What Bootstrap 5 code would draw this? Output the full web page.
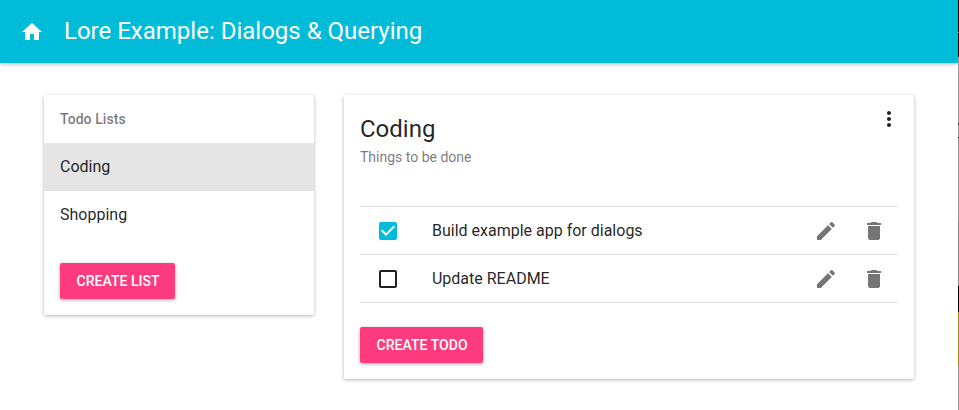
<!DOCTYPE html>
<html lang="en">
<head>
<meta charset="utf-8">
<meta name="viewport" content="width=device-width, initial-scale=1">
<title>Lore Example: Dialogs &amp; Querying</title>
<link href="https://cdn.jsdelivr.net/npm/bootstrap@5.3.0/dist/css/bootstrap.min.css" rel="stylesheet">
<style>
  body { font-family: Roboto, sans-serif; color: rgba(0,0,0,.87); background: #fff; height: 410px; overflow: hidden; }
  .page { min-width: 0; height: 410px; overflow: hidden; }
  .edge { width: 1px; height: 410px; background: linear-gradient(#000 0 32px, #999 32px 33px, #000 33px 57px, #999 57px 123px, #333 123px 125px, #999 125px 137px, #111 137px 138px, #999 138px 221px, #888 221px 286px, #000 286px 312px, #b08f00 312px 366px, #999 366px); }
  .appbar { height: 63px; padding: 0 20px; background: #00bcd9; box-shadow: 0 1px 5px rgba(0,0,0,.16), 0 1px 3px rgba(0,0,0,.16); }
  .appbar .navbar-brand { font-size: 24px; line-height: 36px; margin-left: 20px; padding: 0 0 2px; }
  .board { max-width: 900px; padding: 32px 15px 0; }
  .board > .row { --bs-gutter-x: 30px; }
  .paper { border: 0; border-radius: 2px; color: inherit; box-shadow: 0 1px 5px rgba(0,0,0,.14), 0 1px 3px rgba(0,0,0,.16); }
  .subheader { font-size: 14px; font-weight: 500; line-height: 48px; letter-spacing: .07px; color: rgba(0,0,0,.54); }
  .entry { height: 48px; line-height: 48px; padding: 0 16px; border: 0; color: rgba(0,0,0,.87); }
  .entry.chosen { background: #e5e5e5; }
  .raised { height: 36px; padding: 0 15.6px 0 16.6px; border: 0; border-radius: 2px; font-size: 14px; font-weight: 500; line-height: 37px; letter-spacing: .03px; background: #ff3b80; box-shadow: 0 1px 5px rgba(0,0,0,.16), 0 1px 3px rgba(0,0,0,.2); }
  .intro { height: 111px; }
  .heading { font-size: 24px; font-weight: 400; line-height: 36px; }
  .note { font-size: 14px; line-height: 20px; color: rgba(0,0,0,.54); }
  .more { margin: -4px -3px 0 0; }
  .todos { border-top: 1px solid #e0e0e0; margin: 0 16px; }
  .todo { height: 48px; border-bottom: 1px solid #e0e0e0; line-height: 47px; }
  .todo .tick { width: 72px; padding-left: 16px; }
  .todo .tools { gap: 24px; padding-right: 12px; color: #757575; }
  .ticked { color: #00bcd9; }
  svg { display: block; fill: currentColor; }
</style>
<script src="https://cdn.jsdelivr.net/npm/bootstrap@5.3.0/dist/js/bootstrap.bundle.min.js"></script>
</head>
<body>
<div class="d-flex">
  <div class="page flex-grow-1">
    <nav class="navbar appbar justify-content-start flex-nowrap text-white">
      <svg width="24" height="24" viewBox="0 0 24 24"><path d="M10 20v-6h4v6h5v-8h3L12 3 2 12h3v8z"/></svg>
      <span class="navbar-brand text-white">Lore Example: Dialogs &amp; Querying</span>
    </nav>
    <main class="container-fluid board">
      <div class="row align-items-start">
        <div class="col-4">
          <div class="card paper">
            <div class="subheader px-3">Todo Lists</div>
            <div class="list-group list-group-flush">
              <a class="list-group-item entry chosen">Coding</a>
              <a class="list-group-item entry">Shopping</a>
            </div>
            <div class="px-3 pb-3 pt-4"><button class="btn text-white raised">CREATE LIST</button></div>
          </div>
        </div>
        <div class="col-8">
          <div class="card paper">
            <div class="intro d-flex justify-content-between px-3 pt-3">
              <div>
                <h1 class="heading mb-0">Coding</h1>
                <div class="note">Things to be done</div>
              </div>
              <svg class="more" width="24" height="24" viewBox="0 0 24 24"><path d="M12 8c1.1 0 2-.9 2-2s-.9-2-2-2-2 .9-2 2 .9 2 2 2zm0 2c-1.1 0-2 .9-2 2s.9 2 2 2 2-.9 2-2-.9-2-2-2zm0 6c-1.1 0-2 .9-2 2s.9 2 2 2 2-.9 2-2-.9-2-2-2z"/></svg>
            </div>
            <div class="todos">
              <div class="todo d-flex align-items-center">
                <div class="tick ticked"><svg width="24" height="24" viewBox="0 0 24 24"><path d="M19 3H5c-1.11 0-2 .9-2 2v14c0 1.1.89 2 2 2h14c1.11 0 2-.9 2-2V5c0-1.1-.89-2-2-2zm-9 14l-5-5 1.41-1.41L10 14.17l7.59-7.59L19 8l-9 9z"/></svg></div>
                <div class="flex-grow-1">Build example app for dialogs</div>
                <div class="tools d-flex">
                  <svg width="24" height="24" viewBox="0 0 24 24"><path d="M3 17.25V21h3.75L17.81 9.94l-3.75-3.75L3 17.25zM20.71 7.04c.39-.39.39-1.02 0-1.41l-2.34-2.34c-.39-.39-1.02-.39-1.41 0l-1.83 1.83 3.75 3.75 1.83-1.83z"/></svg>
                  <svg width="24" height="24" viewBox="0 0 24 24"><path d="M6 19c0 1.1.9 2 2 2h8c1.1 0 2-.9 2-2V7H6v12zM19 4h-3.5l-1-1h-5l-1 1H5v2h14V4z"/></svg>
                </div>
              </div>
              <div class="todo d-flex align-items-center">
                <div class="tick"><svg width="24" height="24" viewBox="0 0 24 24"><path d="M19 5v14H5V5h14m0-2H5c-1.1 0-2 .9-2 2v14c0 1.1.9 2 2 2h14c1.1 0 2-.9 2-2V5c0-1.1-.9-2-2-2z"/></svg></div>
                <div class="flex-grow-1">Update README</div>
                <div class="tools d-flex">
                  <svg width="24" height="24" viewBox="0 0 24 24"><path d="M3 17.25V21h3.75L17.81 9.94l-3.75-3.75L3 17.25zM20.71 7.04c.39-.39.39-1.02 0-1.41l-2.34-2.34c-.39-.39-1.02-.39-1.41 0l-1.83 1.83 3.75 3.75 1.83-1.83z"/></svg>
                  <svg width="24" height="24" viewBox="0 0 24 24"><path d="M6 19c0 1.1.9 2 2 2h8c1.1 0 2-.9 2-2V7H6v12zM19 4h-3.5l-1-1h-5l-1 1H5v2h14V4z"/></svg>
                </div>
              </div>
            </div>
            <div class="px-3 pb-3 pt-4"><button class="btn text-white raised">CREATE TODO</button></div>
          </div>
        </div>
      </div>
    </main>
  </div>
  <div class="edge flex-shrink-0"></div>
</div>
</body>
</html>
